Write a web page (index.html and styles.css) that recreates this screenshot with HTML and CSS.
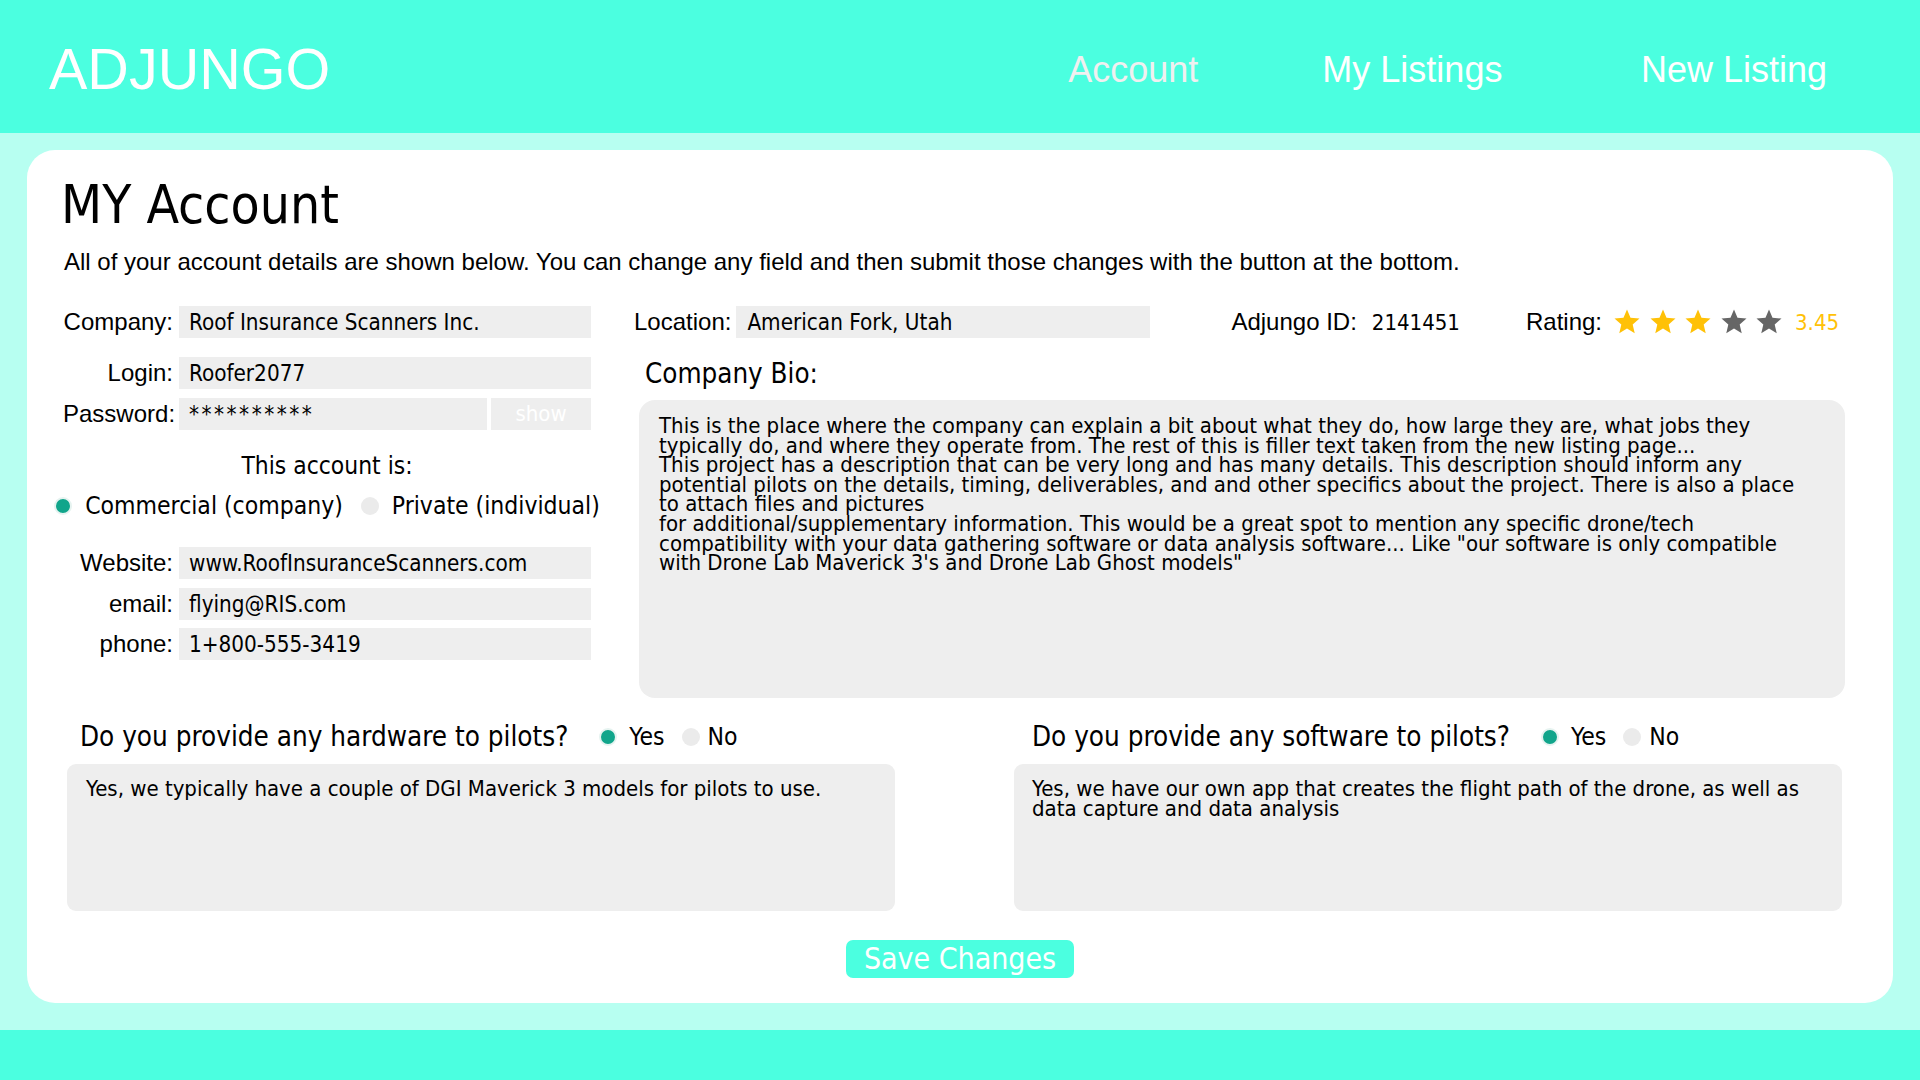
FILE: index.html
```html
<!DOCTYPE html>
<html lang="en">
<head>
<meta charset="utf-8">
<title>Adjungo - My Account</title>
<link rel="stylesheet" href="styles.css">
</head>
<body>
<header class="topbar">
  <div class="logo">ADJUNGO</div>
  <nav class="nav">
    <a class="nav-link nav-current">Account</a>
    <a class="nav-link nav-mid">My Listings</a>
    <a class="nav-link">New Listing</a>
  </nav>
</header>
<main class="band">
  <section class="card">
    <h1 class="title">MY Account</h1>
    <p class="intro">All of your account details are shown below. You can change any field and then submit those changes with the button at the bottom.</p>
    <div class="details">
      <div class="account-col">
        <div class="field"><span class="label">Company:</span><span class="input">Roof Insurance Scanners Inc.</span></div>
        <div class="field field-login"><span class="label">Login:</span><span class="input">Roofer2077</span></div>
        <div class="field field-pw"><span class="label">Password:</span><div class="pw"><span class="input input-secret">**********</span><span class="show-btn">show</span></div></div>
        <div class="type-title">This account is:</div>
        <div class="type-row">
          <span class="radio on"></span><span class="opt opt-first">Commercial (company)</span>
          <span class="radio"></span><span class="opt">Private (individual)</span>
        </div>
        <div class="field field-web"><span class="label">Website:</span><span class="input">www.RoofInsuranceScanners.com</span></div>
        <div class="field field-email"><span class="label">email:</span><span class="input">flying@RIS.com</span></div>
        <div class="field field-phone"><span class="label">phone:</span><span class="input">1+800-555-3419</span></div>
      </div>
      <div class="profile-col">
        <div class="meta-row">
          <span class="label">Location:</span><span class="input input-loc">American Fork, Utah</span>
          <span class="label meta-id">Adjungo ID:</span><span class="value">2141451</span>
          <span class="label meta-rating">Rating:</span>
          <span class="stars">
            <svg class="star star-on" viewBox="0 0 24 24"><path d="M12 17.27L18.18 21l-1.64-7.03L22 9.24l-7.19-.61L12 2 9.19 8.63 2 9.24l5.46 4.73L5.82 21z"/></svg>
            <svg class="star star-on" viewBox="0 0 24 24"><path d="M12 17.27L18.18 21l-1.64-7.03L22 9.24l-7.19-.61L12 2 9.19 8.63 2 9.24l5.46 4.73L5.82 21z"/></svg>
            <svg class="star star-on" viewBox="0 0 24 24"><path d="M12 17.27L18.18 21l-1.64-7.03L22 9.24l-7.19-.61L12 2 9.19 8.63 2 9.24l5.46 4.73L5.82 21z"/></svg>
            <svg class="star" viewBox="0 0 24 24"><path d="M12 17.27L18.18 21l-1.64-7.03L22 9.24l-7.19-.61L12 2 9.19 8.63 2 9.24l5.46 4.73L5.82 21z"/></svg>
            <svg class="star" viewBox="0 0 24 24"><path d="M12 17.27L18.18 21l-1.64-7.03L22 9.24l-7.19-.61L12 2 9.19 8.63 2 9.24l5.46 4.73L5.82 21z"/></svg>
          </span>
          <span class="score">3.45</span>
        </div>
        <div class="bio-label">Company Bio:</div>
        <div class="bio-box">This is the place where the company can explain a bit about what they do, how large they are, what jobs they<br>typically do, and where they operate from. The rest of this is filler text taken from the new listing page...<br>This project has a description that can be very long and has many details. This description should inform any<br>potential pilots on the details, timing, deliverables, and and other specifics about the project. There is also a place<br>to attach files and pictures<br>for additional/supplementary information. This would be a great spot to mention any specific drone/tech<br>compatibility with your data gathering software or data analysis software... Like "our software is only compatible<br>with Drone Lab Maverick 3's and Drone Lab Ghost models"</div>
      </div>
    </div>
    <div class="questions">
      <div class="q q-left">
        <div class="q-head"><span class="q-text">Do you provide any hardware to pilots?</span><span class="radio on"></span><span class="opt opt-yes">Yes</span><span class="radio"></span><span class="opt opt-no">No</span></div>
        <div class="q-box">Yes, we typically have a couple of DGI Maverick 3 models for pilots to use.</div>
      </div>
      <div class="q q-right">
        <div class="q-head"><span class="q-text">Do you provide any software to pilots?</span><span class="radio on"></span><span class="opt opt-yes">Yes</span><span class="radio"></span><span class="opt opt-no">No</span></div>
        <div class="q-box">Yes, we have our own app that creates the flight path of the drone, as well as<br>data capture and data analysis</div>
      </div>
    </div>
    <div class="actions"><button class="save" type="button">Save Changes</button></div>
  </section>
</main>
<footer class="bottombar"></footer>
</body>
</html>
```
FILE: styles.css
```css
* { box-sizing: border-box; }
html, body { margin: 0; padding: 0; }
body {
  width: 1920px;
  height: 1080px;
  overflow: hidden;
  background: #b7fff1;
  font-family: "Liberation Sans", Arial, sans-serif;
  color: #000;
}

.topbar {
  height: 133px;
  background: #4bffe0;
  display: flex;
  align-items: flex-start;
  padding: 0 93px 0 49px;
}
.logo {
  margin-top: 36px;
  font-size: 57.5px;
  line-height: 66px;
  color: #fff;
}
.nav {
  margin-left: auto;
  margin-top: 49px;
  display: flex;
  gap: 124px;
}
.nav-link {
  font-size: 36px;
  line-height: 42px;
  color: #fff;
  text-decoration: none;
}
.nav-current { color: #f0f0f0; }
.nav-mid { margin-right: 14.5px; }

.band {
  padding: 17px 27px 27px;
}
.card {
  background: #fff;
  border-radius: 28px;
  height: 853px;
  padding: 25px 48px 25px 36px;
}

.title, .input, .show-btn, .type-title, .opt, .value, .score, .bio-label, .bio-box, .q-text, .q-box, .save {
  font-family: "DejaVu Sans Condensed", "DejaVu Sans", sans-serif;
  font-stretch: condensed;
}

.title {
  margin: 0 0 0 -2px;
  font-size: 53px;
  line-height: 60px;
  font-weight: normal;
}
.intro {
  margin: 14px 0 0 1px;
  font-size: 24px;
  line-height: 26px;
}

.details {
  margin-top: 31px;
  display: flex;
  gap: 43px;
}
.account-col {
  width: 528px;
  flex: none;
}
.field {
  display: grid;
  grid-template-columns: 110px 412px;
  column-gap: 6px;
  align-items: center;
  height: 32px;
}
.label {
  font-size: 24px;
  text-align: right;
  white-space: nowrap;
}
.input {
  display: block;
  height: 32px;
  line-height: 32px;
  background: #eeeeee;
  padding-left: 10px;
  font-size: 22.3px;
  white-space: nowrap;
  overflow: hidden;
}
.input-secret { letter-spacing: 2.5px; }
.field-login { margin-top: 19px; }
.field-pw { margin-top: 9px; }
.field-web { margin-top: 26px; }
.field-email { margin-top: 9px; }
.field-phone { margin-top: 8px; }
.pw {
  display: grid;
  grid-template-columns: 308px 100px;
  column-gap: 4px;
}
.show-btn {
  height: 32px;
  line-height: 32px;
  background: #eeeeee;
  color: #fff;
  text-align: center;
  font-size: 22px;
}

.type-title {
  margin-top: 21px;
  font-size: 24.4px;
  line-height: 30px;
  text-align: center;
}
.type-row {
  margin-top: 10px;
  height: 30px;
  display: flex;
  align-items: center;
  justify-content: center;
  white-space: nowrap;
}
.radio {
  width: 18px;
  height: 18px;
  flex: none;
  border-radius: 50%;
  background: #ebebeb;
}
.radio.on {
  background: #11a58b;
  border: 2px solid #e6f3f0;
}
.opt {
  font-size: 24.5px;
  line-height: 30px;
  margin-left: 13px;
}
.opt-first { margin-right: 18px; }

.profile-col {
  flex: 1;
  min-width: 0;
}
.meta-row {
  display: flex;
  align-items: center;
  height: 32px;
  white-space: nowrap;
}
.input-loc {
  width: 414px;
  margin-left: 5px;
  padding-left: 11px;
}
.meta-id { margin-left: 81px; }
.value {
  margin-left: 15px;
  font-size: 22px;
}
.meta-rating { margin-left: 66px; }
.stars {
  margin-left: 10px;
  display: flex;
  gap: 5.5px;
}
.star {
  width: 30px;
  height: 30px;
  fill: #666666;
}
.star-on { fill: #ffc107; }
.score {
  margin-left: 11px;
  font-size: 22px;
  color: #ffc107;
}

.bio-label {
  margin: 20px 0 0 11px;
  font-size: 27.5px;
  line-height: 30px;
}
.bio-box {
  margin: 12px 0 0 5px;
  height: 298px;
  background: #eeeeee;
  border-radius: 16px;
  padding: 16px 20px;
  font-size: 22px;
  line-height: 19.6px;
  white-space: nowrap;
  overflow: hidden;
}

.questions {
  margin: 22px 0 0 4px;
  display: grid;
  grid-template-columns: 828px 828px;
  column-gap: 119px;
}
.q-head {
  height: 34px;
  display: flex;
  align-items: center;
  white-space: nowrap;
}
.q-left .q-head { padding-left: 13px; }
.q-right .q-head { padding-left: 18px; }
.q-text {
  font-size: 27.6px;
  line-height: 34px;
  margin-right: 31px;
}
.q-head .opt { margin-left: 12px; }
.q-head .opt-yes { margin-right: 17px; }
.q-head .opt-no { margin-left: 8px; }
.q-box {
  margin-top: 10px;
  height: 147px;
  background: #eeeeee;
  border-radius: 9px;
  padding: 15px 19px;
  font-size: 22px;
  line-height: 19.6px;
  white-space: nowrap;
  overflow: hidden;
}
.q-right .q-box { padding-left: 18px; }

.actions {
  margin-top: 29px;
  padding-left: 12px;
  display: flex;
  justify-content: center;
}
.save {
  width: 228px;
  height: 38px;
  border: 0;
  border-radius: 7px;
  background: #4bffe0;
  color: #fff;
  font-size: 30px;
  line-height: 38px;
  padding: 0;
}

.bottombar {
  height: 50px;
  background: #4bffe0;
}
```
